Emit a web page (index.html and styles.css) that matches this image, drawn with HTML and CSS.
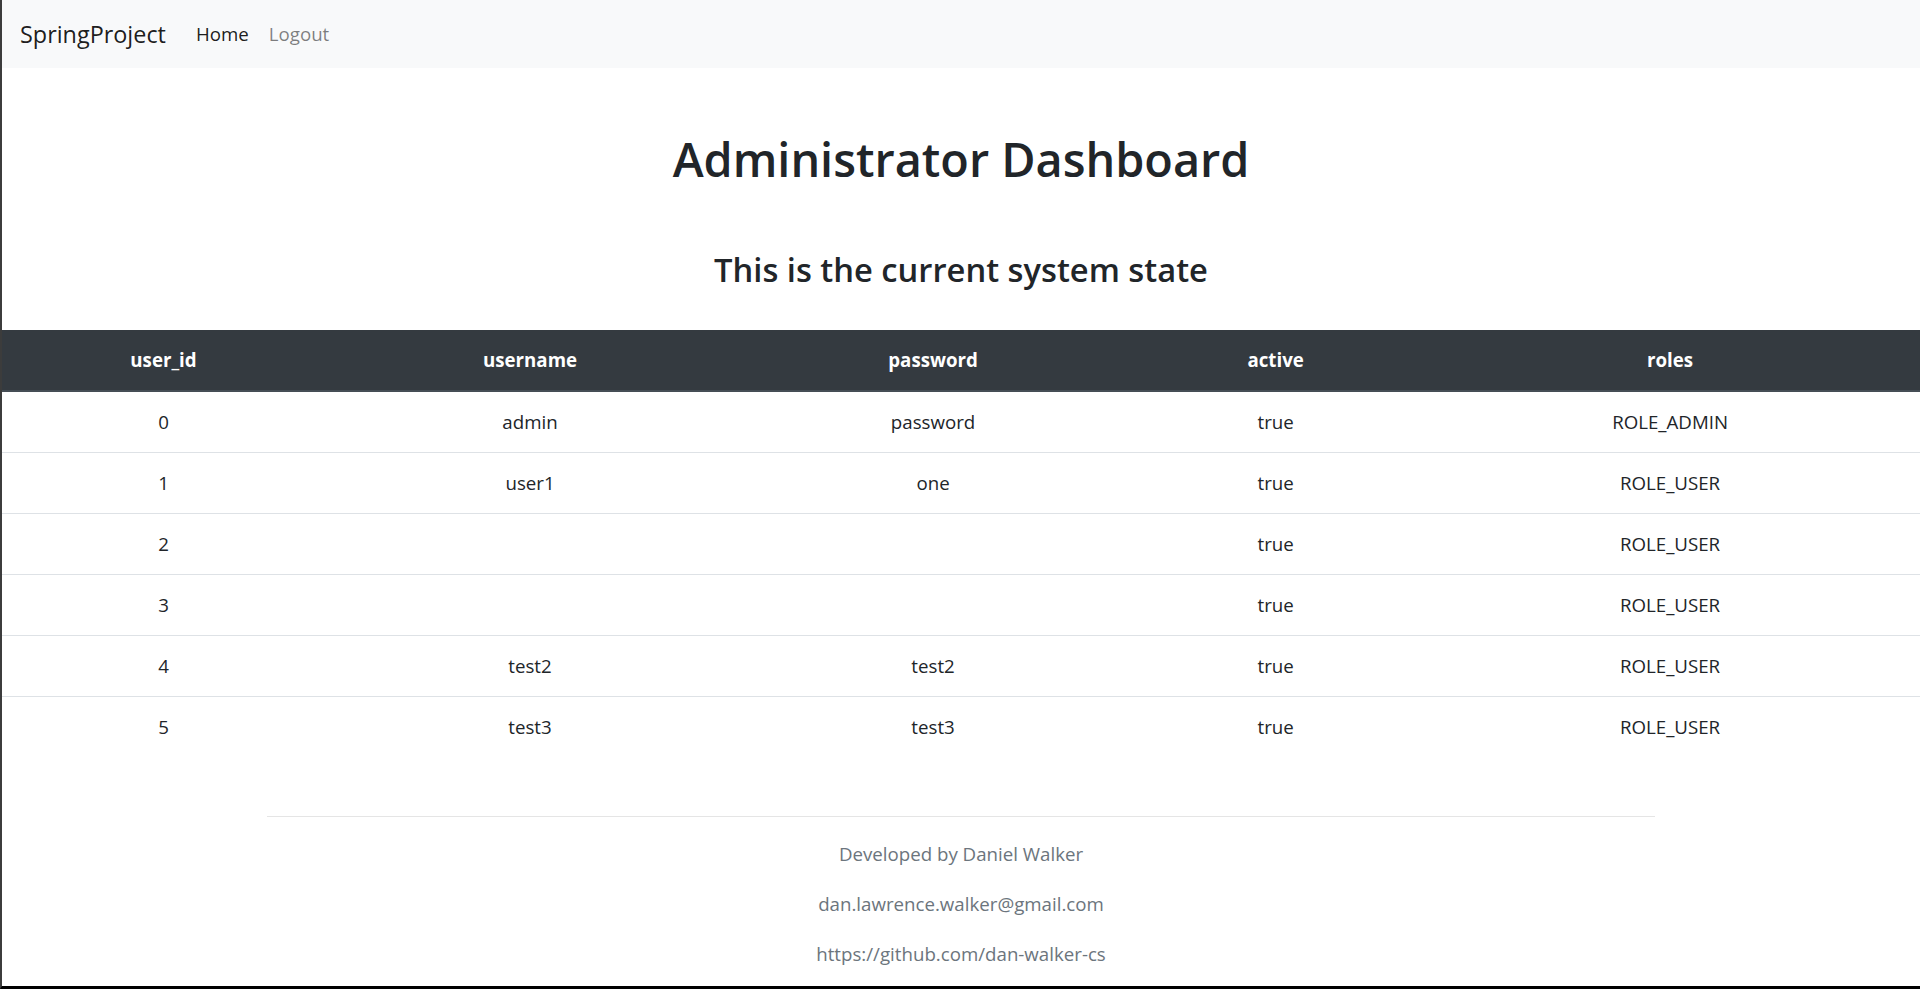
FILE: index.html
```html
<!DOCTYPE html>
<html lang="en">
<head>
<meta charset="utf-8">
<title>Administrator Dashboard</title>
<link rel="stylesheet" href="styles.css">
</head>
<body>
<nav class="navbar">
  <a class="brand" href="#">SpringProject</a>
  <ul class="nav-links">
    <li><a class="nav-link active" href="#">Home</a></li>
    <li><a class="nav-link" href="#">Logout</a></li>
  </ul>
</nav>
<main class="main">
  <h1 class="title">Administrator Dashboard</h1>
  <h3 class="subtitle">This is the current system state</h3>
  <table class="users">
    <colgroup>
      <col class="c-id"><col class="c-user"><col class="c-pass"><col class="c-active"><col class="c-roles">
    </colgroup>
    <thead>
      <tr><th>user_id</th><th>username</th><th>password</th><th>active</th><th>roles</th></tr>
    </thead>
    <tbody>
      <tr><td>0</td><td>admin</td><td>password</td><td>true</td><td>ROLE_ADMIN</td></tr>
      <tr><td>1</td><td>user1</td><td>one</td><td>true</td><td>ROLE_USER</td></tr>
      <tr><td>2</td><td></td><td></td><td>true</td><td>ROLE_USER</td></tr>
      <tr><td>3</td><td></td><td></td><td>true</td><td>ROLE_USER</td></tr>
      <tr><td>4</td><td>test2</td><td>test2</td><td>true</td><td>ROLE_USER</td></tr>
      <tr><td>5</td><td>test3</td><td>test3</td><td>true</td><td>ROLE_USER</td></tr>
    </tbody>
  </table>
  <footer class="footer">
    <hr class="rule">
    <p>Developed by Daniel Walker</p>
    <p>dan.lawrence.walker@gmail.com</p>
    <p>https://github.com/dan-walker-cs</p>
  </footer>
</main>
</body>
</html>
```

FILE: styles.css
```css
* { box-sizing: border-box; }

html, body { height: 100%; }

body {
  margin: 0;
  min-height: 100vh;
  font-family: "Open Sans", "Noto Sans", sans-serif;
  font-size: 18.7px;
  line-height: 30px;
  color: #212529;
  background: #fff;
  border-left: 2px solid #3c3c3c;
  border-bottom: 3px solid #000;
  overflow: hidden;
}

.navbar {
  display: flex;
  align-items: center;
  height: 68px;
  padding: 0 18px;
  background: #f8f9fa;
}

.brand {
  font-size: 23.4px;
  line-height: 37px;
  color: rgba(0, 0, 0, 0.9);
  text-decoration: none;
  margin-right: 20px;
}

.nav-links {
  display: flex;
  list-style: none;
  margin: 0;
  padding: 0;
}

.nav-link {
  display: block;
  padding: 0 10px;
  color: rgba(0, 0, 0, 0.5);
  text-decoration: none;
}

.nav-link.active { color: rgba(0, 0, 0, 0.9); }

.main { display: flex; flex-direction: column; }

.title {
  margin: 61px 0 0;
  text-align: center;
  font-size: 46.8px;
  line-height: 60px;
  font-weight: 600;
}

.subtitle {
  margin: 60px 0 0;
  text-align: center;
  font-size: 32.7px;
  line-height: 42px;
  font-weight: 600;
}

.users {
  margin-top: 39px;
  width: 100%;
  border-collapse: collapse;
  table-layout: fixed;
}

.c-id { width: 16.84%; }
.c-user { width: 21.38%; }
.c-pass { width: 20.65%; }
.c-active { width: 15.07%; }
.c-roles { width: 26.06%; }

.users th {
  background: #343a40;
  color: #fff;
  font-weight: 700;
  padding: 15px;
  border-bottom: 2px solid #454d55;
  text-align: center;
}

.users td {
  padding: 15px;
  height: 61px;
  border-top: 1px solid #dee2e6;
  text-align: center;
}

.footer {
  width: 1388px;
  margin: 0 auto;
  text-align: center;
  color: #6c757d;
}

.rule {
  margin: 58px 0 22px;
  border: 0;
  border-top: 1px solid rgba(0, 0, 0, 0.1);
}

.footer p { margin: 0 0 20px; }
```
